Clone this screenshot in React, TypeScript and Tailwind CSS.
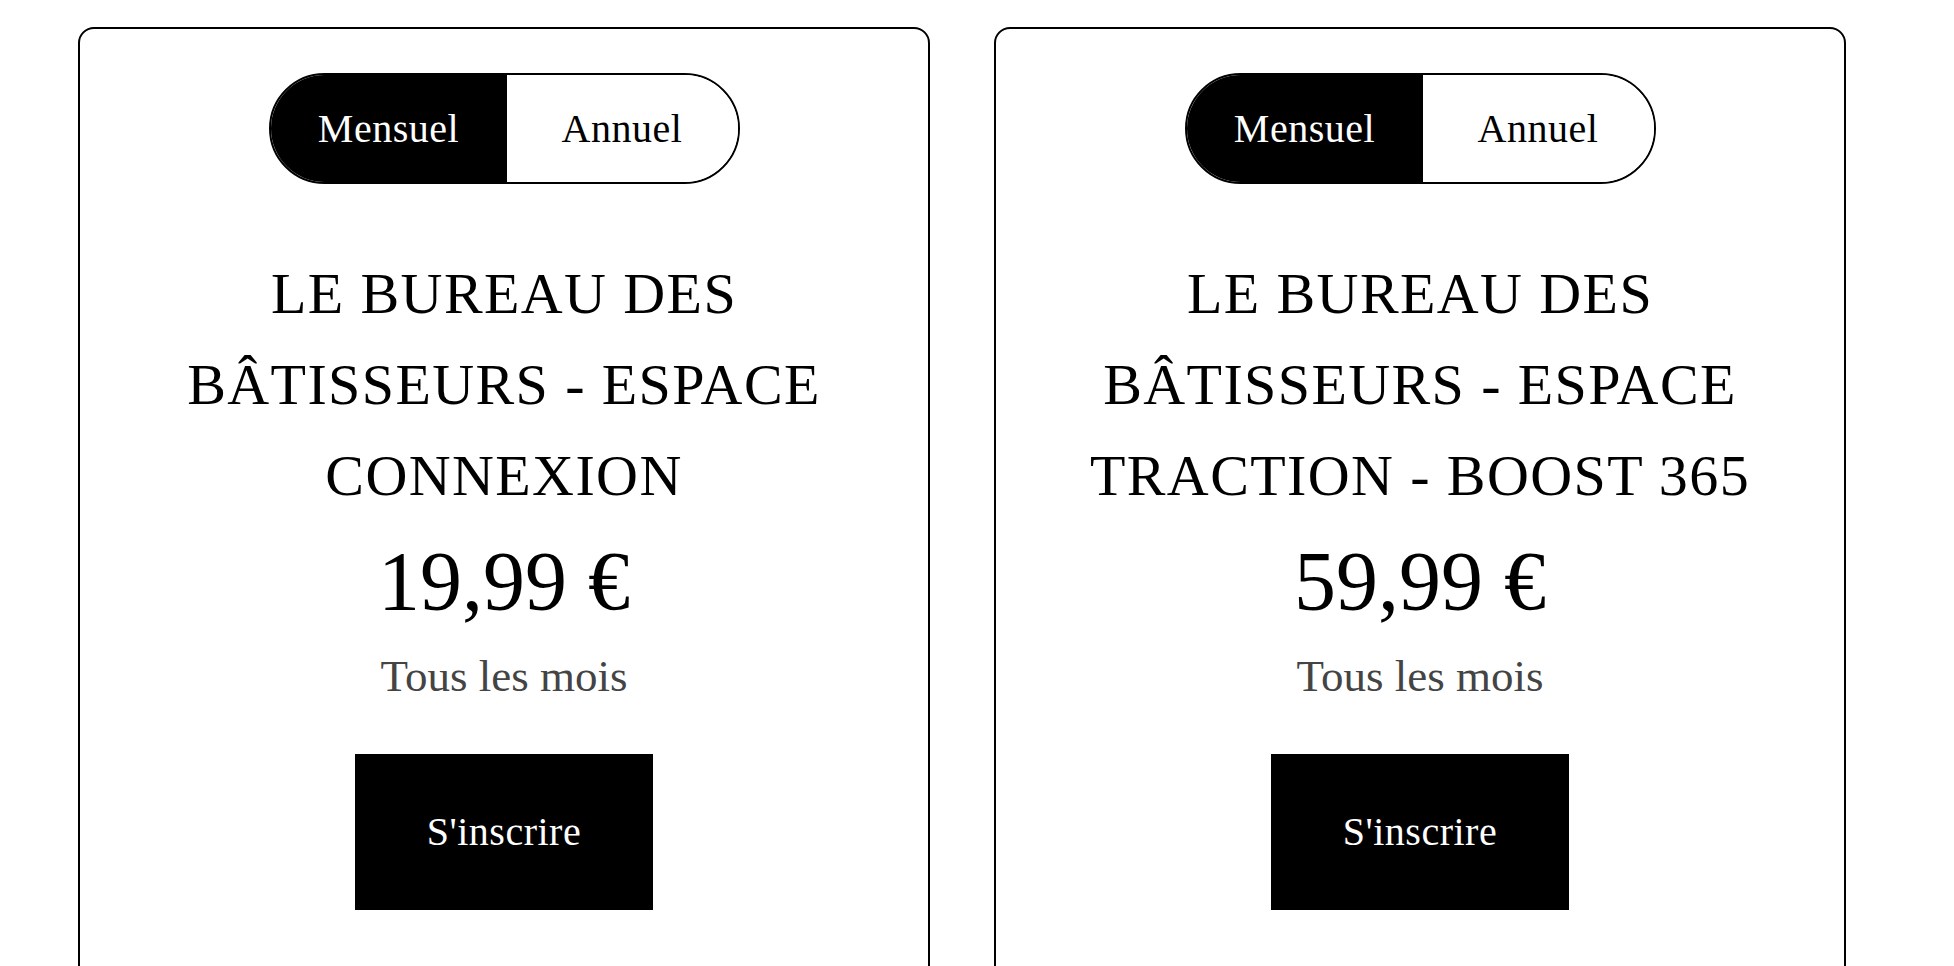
import React from "react";

const serif = { fontFamily: '"Liberation Serif", "Times New Roman", serif' };

function Card({ title, price }: { title: string; price: string }) {
  return (
    <div className="w-[852px] shrink-0 border-2 border-black rounded-[16px] bg-white flex flex-col items-center pt-[44px] pb-[120px] px-[80px]">
      <div className="flex h-[111px] w-[471px] border-2 border-black rounded-full overflow-hidden">
        <div className="w-[236px] bg-black text-white flex items-center justify-center text-[40px] tracking-[0.5px]">Mensuel</div>
        <div className="flex-1 bg-white text-black flex items-center justify-center text-[40px] tracking-[0.5px]">Annuel</div>
      </div>
      <h2 className="mt-[64px] text-[58px] leading-[91px] tracking-[1.4px] text-black text-center uppercase font-normal">{title}</h2>
      <div className="mt-[19px] text-[84px] leading-[84px] text-black">{price}</div>
      <div className="mt-[22px] text-[45px] leading-[60px] text-[#444444]">Tous les mois</div>
      <button className="mt-[48px] h-[156px] w-[298px] bg-black text-white text-[40px] tracking-[0.5px] flex items-center justify-center">S'inscrire</button>
    </div>
  );
}

export default function App() {
  return (
    <div style={serif} className="bg-white min-h-screen w-full overflow-hidden">
      <div className="flex gap-[64px] pl-[78px] pt-[27px]">
        <Card title="LE BUREAU DES BÂTISSEURS - ESPACE CONNEXION" price="19,99 €" />
        <Card title="LE BUREAU DES BÂTISSEURS - ESPACE TRACTION - BOOST 365" price="59,99 €" />
      </div>
    </div>
  );
}
